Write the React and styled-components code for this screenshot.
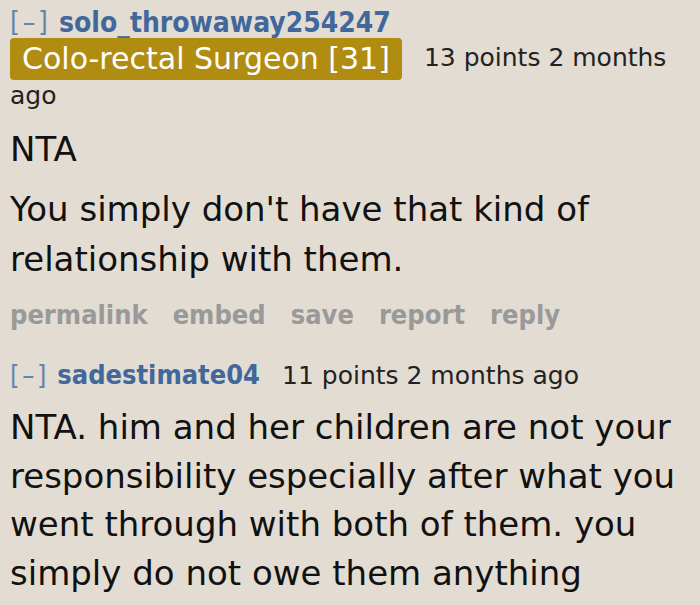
import * as React from 'react'
import styled, { createGlobalStyle } from 'styled-components'

const GlobalStyle = createGlobalStyle`
    html, body {
        margin: 0;
        background: #e3dcd2;
    }
    body {
        font-family: "DejaVu Sans", sans-serif;
        color: #111;
    }
`

const StyledPage = styled.div`
    padding: 7px 10px 0 10px;
    width: 700px;
    height: 605px;
    box-sizing: border-box;
    overflow: hidden;
`

const StyledComment = styled.div`
    margin-bottom: ${(props) => props.gap || '0'};
`

const StyledTagline = styled.div`
    font-size: ${(props) => props.size};
    line-height: ${(props) => props.lineHeight};
    color: #222;
`

const StyledExpand = styled.span`
    font-family: "DejaVu Sans Condensed", sans-serif;
    font-size: ${(props) => props.size};
    color: #6783ad;
    letter-spacing: 0.1em;
    margin-right: 0.3em;
`

const StyledAuthor = styled.span`
    font-family: "DejaVu Sans Condensed", sans-serif;
    font-size: ${(props) => props.size};
    color: #41679b;
    font-weight: bold;
    margin-right: 22px;
`

const StyledFlair = styled.span`
    display: inline-block;
    margin: -1px 22px 0 0;
    background: #b08c11;
    color: #fff;
    border-radius: 4px;
    padding: 0 12px;
    font-size: 30px;
    line-height: 42px;
`

const StyledMeta = styled.span`
    font-size: 25px;
    color: #222;
    vertical-align: ${(props) => props.raise || '0'};
`

const StyledBody = styled.div`
    margin-top: ${(props) => props.gap};
    font-size: 34px;
    line-height: ${(props) => props.lineHeight};
    color: #111;

    p {
        margin: 0 0 10px 0;
    }

    p:last-child {
        margin-bottom: 0;
    }
`

const StyledButtons = styled.ul`
    list-style: none;
    margin: 15px 0 0 0;
    padding: 0;
    display: flex;
    gap: 25px;
    font-family: "DejaVu Sans Condensed", sans-serif;
    font-size: 27px;
    line-height: 32px;
    font-weight: bold;
    color: #999;
`

const Comment = ({ comment }) => (
    <StyledComment gap={comment.gap}>
        <StyledTagline size={comment.tagSize} lineHeight={comment.tagLine}>
            <StyledExpand size={comment.authorSize}>[–]</StyledExpand>
            <StyledAuthor size={comment.authorSize}>{comment.author}</StyledAuthor>
            {comment.flair && <StyledFlair>{comment.flair}</StyledFlair>}
            <StyledMeta raise={comment.metaRaise}>
                {comment.points} points {comment.age}
            </StyledMeta>
        </StyledTagline>
        <StyledBody gap={comment.bodyGap} lineHeight={comment.bodyLine}>
            {comment.body.map((text) => (
                <p key={text}>{text}</p>
            ))}
        </StyledBody>
        {comment.buttons && (
            <StyledButtons>
                {['permalink', 'embed', 'save', 'report', 'reply'].map((b) => (
                    <li key={b}>{b}</li>
                ))}
            </StyledButtons>
        )}
    </StyledComment>
)

const comments = [
    {
        id: 1,
        author: 'solo_throwaway254247',
        flair: 'Colo-rectal Surgeon [31]',
        points: 13,
        age: '2 months ago',
        tagSize: '28px',
        tagLine: '32px',
        authorSize: '28px',
        metaRaise: '3px',
        bodyGap: '10px',
        bodyLine: '50px',
        body: ['NTA', "You simply don't have that kind of relationship with them."],
        buttons: true,
        gap: '27px',
    },
    {
        id: 2,
        author: 'sadestimate04',
        points: 11,
        age: '2 months ago',
        tagSize: '25px',
        tagLine: '34px',
        authorSize: '27px',
        bodyGap: '10px',
        bodyLine: '48.5px',
        body: [
            'NTA. him and her children are not your responsibility especially after what you went through with both of them. you simply do not owe them anything',
        ],
    },
]

const App = () => {
    return (
        <StyledPage>
            <GlobalStyle />
            {comments.map((c) => (
                <Comment key={c.id} comment={c} />
            ))}
        </StyledPage>
    )
}

export default App
